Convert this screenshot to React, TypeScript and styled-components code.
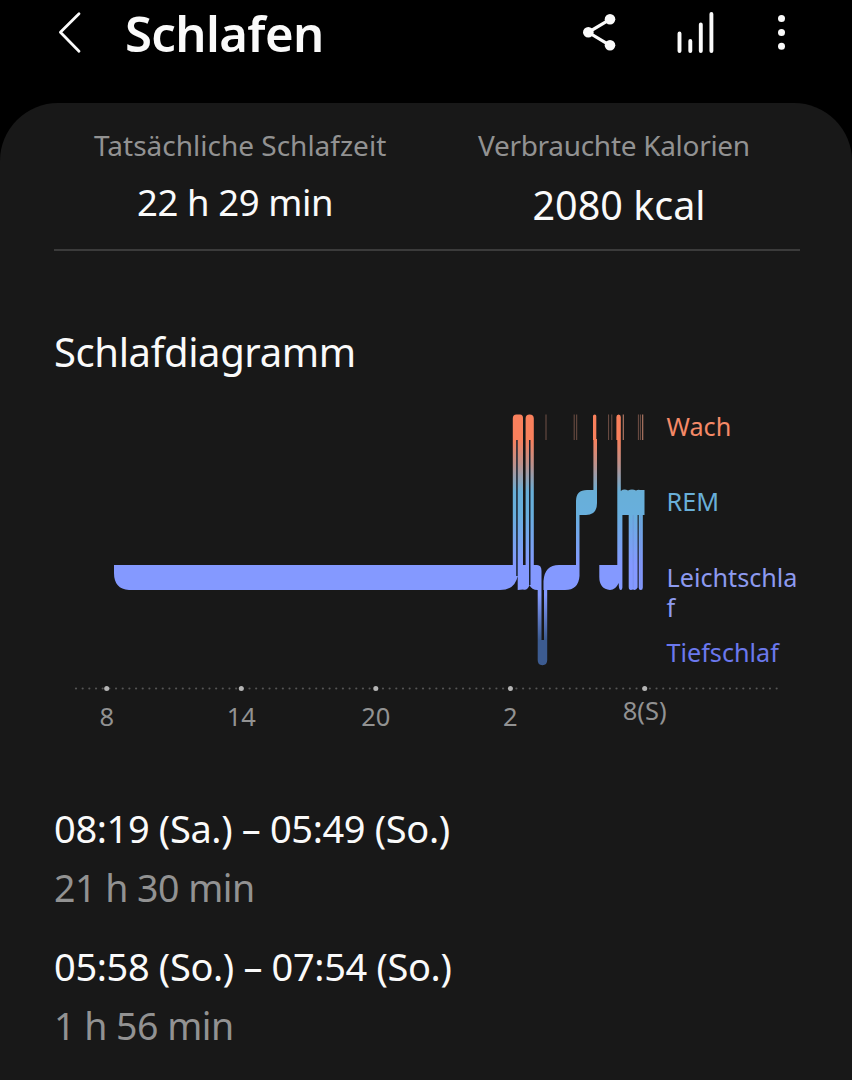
import React from "react";
import styled, { createGlobalStyle } from "styled-components";

const GlobalStyle = createGlobalStyle`
  * { box-sizing: border-box; }
  body { margin: 0; background: #000; }
`;

const Screen = styled.div`
  width: 852px;
  height: 1080px;
  overflow: hidden;
  background: #000;
  color: #fafafa;
  font-family: "Noto Sans", sans-serif;
`;

const Header = styled.header`
  display: flex;
  align-items: flex-start;
  height: 103px;
  padding: 0 54px 0 56px;
`;

const BackIcon = styled.svg`
  width: 28px;
  height: 66px;
  margin-right: 41px;
`;

const Title = styled.h1`
  flex: 1;
  margin: 0;
  font-size: 49px;
  font-weight: 600;
  line-height: 66px;
  letter-spacing: -0.6px;
`;

const Actions = styled.svg`
  width: 218px;
  height: 66px;
`;

const Panel = styled.main`
  height: 977px;
  padding: 24px 52px 0 54px;
  border-radius: 58px 58px 0 0;
  background: #181818;
`;

const Text = styled.div<{ $size: number; $line: number; $color?: string; $spacing?: number }>`
  font-size: ${(p) => p.$size}px;
  line-height: ${(p) => p.$line}px;
  color: ${(p) => p.$color ?? "#fafafa"};
  letter-spacing: ${(p) => p.$spacing ?? 0}px;
  white-space: nowrap;
`;

const Stats = styled.section`
  display: grid;
  grid-template-columns: 383px 1fr;
  height: 124px;
  border-bottom: 2px solid #3b3b3b;
`;

const Stat = styled.div<{ $indent: number; $valueIndent: number; $gap: number }>`
  display: flex;
  flex-direction: column;
  gap: ${(p) => p.$gap}px;
  padding-left: ${(p) => p.$indent}px;
  & > :last-child { padding-left: ${(p) => p.$valueIndent}px; }
`;

const SectionTitle = styled.h2`
  margin: 76px 0 0;
  font-size: 40px;
  font-weight: 400;
  line-height: 50px;
  letter-spacing: -0.4px;
`;

const ChartRow = styled.div`
  display: flex;
  height: 276px;
  margin-top: 23px;
`;

const Plot = styled.svg`
  width: 611px;
  height: 276px;
  flex: none;
`;

const Legend = styled.ul`
  margin: 0;
  padding: 11px 0 0 1.5px;
  list-style: none;
  width: 134px;
`;

const LegendItem = styled.li<{ $color: string }>`
  height: 75.3px;
  color: ${(p) => p.$color};
  font-size: 25.2px;
  line-height: 30.5px;
  word-break: break-all;
`;

const Axis = styled.svg`
  display: block;
  width: 746px;
  height: 64px;
`;

const Sessions = styled.section`
  display: flex;
  flex-direction: column;
  gap: 28px;
  padding-top: 63px;
`;

const Session = styled.div`
  display: flex;
  flex-direction: column;
  gap: 10px;
`;

const GREY = "#929292";

const shortAwake = [546, 574.2, 576.7, 608.6, 611.8, 638.4, 640.4];
const hours = [
  { x: 106.7, label: "8", y: 726 },
  { x: 241.3, label: "14", y: 726 },
  { x: 375.8, label: "20", y: 726 },
  { x: 510.4, label: "2", y: 726 },
  { x: 644.7, label: "8(S)", y: 720 },
];

function SleepPlot() {
  return (
    <Plot viewBox="54 400 611 276">
      <defs>
        <linearGradient id="stage" gradientUnits="userSpaceOnUse" x1="0" y1="414" x2="0" y2="665">
          <stop offset="0.1" stopColor="#f9805c" />
          <stop offset="0.2" stopColor="#bd918b" />
          <stop offset="0.31" stopColor="#68afd8" />
          <stop offset="0.4" stopColor="#68afdd" />
          <stop offset="0.6" stopColor="#8499ff" />
          <stop offset="0.72" stopColor="#8499ff" />
          <stop offset="0.9" stopColor="#3c5b90" />
        </linearGradient>
      </defs>
      <g fill="url(#stage)">
        <path d="M114 565H512.8V418.500Q512.800 414.500 516.500 414.500H520Q523 414.500 523 418V565H525.600V418.500Q525.600 414.500 529.600 414.500Q533.800 414.500 533.800 418.500V565H537Q541.500 565 541.500 571V640H544V590H543.500V581Q544.500 565 559 565H576V501Q576 490 587 490H593.400V440H593V416Q593 414.500 594.800 414.500Q596.300 414.500 596.300 416V439H597V503Q597 515 586 515H579.500V576Q578.500 590 565 590H547.200V660Q547.200 665.200 542.400 665.200Q537.700 665.200 537.700 660V590Q531.500 590 529.500 585Q527.500 591 523 589.500L517.700 590V576Q515 590 500 590H129Q114 589 114 573Z" />
        <path d="M599.300 565H617.300V440H616.400V417Q616.400 414.500 618.600 414.500Q620.800 414.500 620.800 417V491Q624 488.500 628 490.500Q632 488.500 636 490.500Q638 489.500 640 490H644.500V515H642.800V587.500Q642.800 590 640.800 590Q638.700 590 638.700 587.500V515H637.600V587.500Q636 591 633 589.500Q628.700 591 628.700 587V515H622.400V587.500Q622.400 590 620.500 590Q618.700 590 618.700 583Q615.500 590 610 590Q599.300 589 599.300 577Z" />
      </g>
      <g fill="#18222f">
        <rect x="516.200" y="440" width="1.500" height="136" />
        <rect x="529" y="440" width="1.500" height="145" />
      </g>
      <g stroke="#6f86cf" strokeOpacity="0.55" strokeWidth="0.7">
        <path d="M633.200 515V588M640.800 515V588" />
      </g>
      <g stroke="#715046" strokeWidth="1">
        {shortAwake.map((x) => (
          <path key={x} d={`M${x} 414.500V440`} />
        ))}
      </g>
      <path d="M623.300 414.500V440M642.700 414.500V440" stroke="#b87c67" strokeWidth="1.100" />
    </Plot>
  );
}

function HourAxis() {
  return (
    <Axis viewBox="54 676 746 64">
      <g fill="#555">
        {Array.from({ length: 106 }, (_, i) => (
          <circle key={i} cx={76 + i * 6.673} cy="688.500" r="1.100" />
        ))}
      </g>
      {hours.map((h) => (
        <g key={h.label}>
          <circle cx={h.x} cy="688.600" r="2.500" fill="#b5b5b5" />
          <text x={h.x} y={h.y} fill={GREY} fontSize="25.5" textAnchor="middle">
            {h.label}
          </text>
        </g>
      ))}
    </Axis>
  );
}

export default function App() {
  return (
    <Screen>
      <GlobalStyle />
      <Header>
        <BackIcon viewBox="56 0 28 66" fill="none" stroke="#fafafa" strokeWidth="2.800" strokeLinecap="round" strokeLinejoin="round">
          <path d="M79 13.800L60.400 32.300L79 51.300" />
        </BackIcon>
        <Title>Schlafen</Title>
        <Actions viewBox="580 0 218 66" fill="#fafafa" stroke="#fafafa">
          <path d="M610 19.300L588.300 32.300L610 45.300" fill="none" strokeWidth="3.200" />
          <g stroke="none">
            <circle cx="610" cy="19.300" r="5.300" />
            <circle cx="588.300" cy="32.300" r="5.300" />
            <circle cx="610" cy="45.300" r="5.300" />
            <circle cx="781.500" cy="18.500" r="3.500" />
            <circle cx="781.500" cy="32.400" r="3.500" />
            <circle cx="781.500" cy="46.300" r="3.500" />
          </g>
          <path d="M679.500 33.500V51M690.300 41V51M700.800 24.500V51M711.400 14V51" strokeWidth="3.900" strokeLinecap="round" />
        </Actions>
      </Header>
      <Panel>
        <Stats>
          <Stat $indent={40} $valueIndent={43} $gap={15}>
            <Text $size={28} $line={36} $color={GREY}>Tatsächliche Schlafzeit</Text>
            <Text $size={36.5} $line={48} $spacing={-0.4}>22 h 29 min</Text>
          </Stat>
          <Stat $indent={41} $valueIndent={54.5} $gap={18}>
            <Text $size={28} $line={36} $color={GREY} $spacing={-0.3}>Verbrauchte Kalorien</Text>
            <Text $size={39.5} $line={48}>2080 kcal</Text>
          </Stat>
        </Stats>
        <SectionTitle>Schlafdiagramm</SectionTitle>
        <ChartRow>
          <SleepPlot />
          <Legend>
            <LegendItem $color="#f58967">Wach</LegendItem>
            <LegendItem $color="#69afd8">REM</LegendItem>
            <LegendItem $color="#8d9af0">Leichtschlaf</LegendItem>
            <LegendItem $color="#6b78ed">Tiefschlaf</LegendItem>
          </Legend>
        </ChartRow>
        <HourAxis />
        <Sessions>
          <Session>
            <Text $size={38} $line={50} $spacing={-0.36}>08:19 (Sa.) – 05:49 (So.)</Text>
            <Text $size={37.5} $line={50} $color={GREY} $spacing={-0.5}>21 h 30 min</Text>
          </Session>
          <Session>
            <Text $size={38} $line={50} $spacing={-0.36}>05:58 (So.) – 07:54 (So.)</Text>
            <Text $size={37.5} $line={50} $color={GREY} $spacing={-0.5}>1 h 56 min</Text>
          </Session>
        </Sessions>
      </Panel>
    </Screen>
  );
}
